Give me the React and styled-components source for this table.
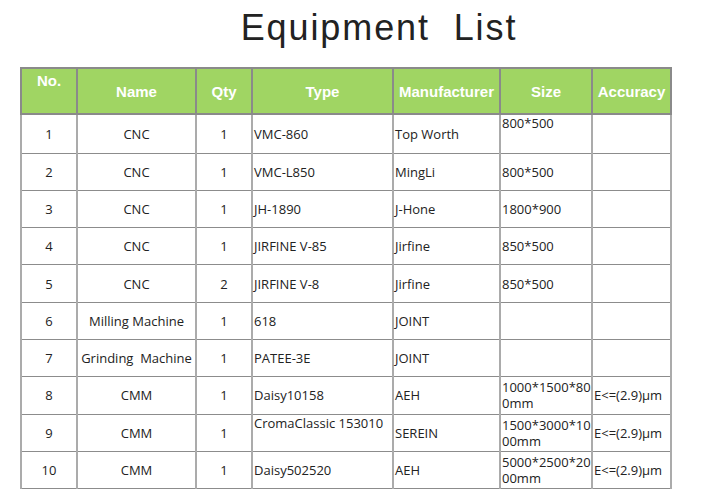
import React from "react";
import styled, { createGlobalStyle } from "styled-components";

const GlobalStyle = createGlobalStyle`
  body {
    margin: 0;
    background: #ffffff;
  }
`;

const columns = [
  { key: "no", title: "No.", width: 56, align: "center", top: true },
  { key: "name", title: "Name", width: 119, align: "center" },
  { key: "qty", title: "Qty", width: 56, align: "center" },
  { key: "type", title: "Type", width: 141, align: "left" },
  { key: "maker", title: "Manufacturer", width: 107, align: "left" },
  { key: "size", title: "Size", width: 92, align: "left" },
  { key: "acc", title: "Accuracy", width: 79, align: "left" },
];

const rows = [
  { no: "1", name: "CNC", qty: "1", type: "VMC-860", maker: "Top Worth", size: "800*500", acc: "", tall: true, sizeTop: true },
  { no: "2", name: "CNC", qty: "1", type: "VMC-L850", maker: "MingLi", size: "800*500", acc: "" },
  { no: "3", name: "CNC", qty: "1", type: "JH-1890", maker: "J-Hone", size: "1800*900", acc: "" },
  { no: "4", name: "CNC", qty: "1", type: "JIRFINE V-85", maker: "Jirfine", size: "850*500", acc: "" },
  { no: "5", name: "CNC", qty: "2", type: "JIRFINE V-8", maker: "Jirfine", size: "850*500", acc: "" },
  { no: "6", name: "Milling Machine", qty: "1", type: "618", maker: "JOINT", size: "", acc: "" },
  { no: "7", name: "Grinding\u00a0 Machine", qty: "1", type: "PATEE-3E", maker: "JOINT", size: "", acc: "" },
  { no: "8", name: "CMM", qty: "1", type: "Daisy10158", maker: "AEH", size: "1000*1500*800mm", acc: "E<=(2.9)μm" },
  { no: "9", name: "CMM", qty: "1", type: "CromaClassic 153010", maker: "SEREIN", size: "1500*3000*1000mm", acc: "E<=(2.9)μm", typeTop: true },
  { no: "10", name: "CMM", qty: "1", type: "Daisy502520", maker: "AEH", size: "5000*2500*2000mm", acc: "E<=(2.9)μm" },
];

export default function App() {
  return (
    <Page>
      <GlobalStyle />
      <Title>Equipment&nbsp; List</Title>
      <Table>
        <colgroup>
          {columns.map((c) => (
            <col key={c.key} style={{ width: c.width }} />
          ))}
        </colgroup>
        <thead>
          <tr>
            {columns.map((c) => (
              <HeadCell key={c.key} $top={c.top}>
                {c.title}
              </HeadCell>
            ))}
          </tr>
        </thead>
        <tbody>
          {rows.map((r) => (
            <Row key={r.no} $tall={r.tall}>
              {columns.map((c) => (
                <Cell
                  key={c.key}
                  $align={c.align}
                  $top={(c.key === "size" && r.sizeTop) || (c.key === "type" && r.typeTop)}
                  $dark={c.key === "acc"}
                >
                  {r[c.key]}
                </Cell>
              ))}
            </Row>
          ))}
        </tbody>
      </Table>
    </Page>
  );
}

const Page = styled.div`
  width: 716px;
  height: 495px;
  padding-top: 6px;
  box-sizing: border-box;
  overflow: hidden;
`;

const Title = styled.h1`
  margin: 0 0 0 42px;
  height: 61px;
  text-align: center;
  font-family: "Liberation Sans", Arial, sans-serif;
  font-weight: 400;
  font-size: 36px;
  letter-spacing: 1.9px;
  line-height: 44px;
  color: #222222;
`;

const Table = styled.table`
  margin-left: 20px;
  width: 652px;
  table-layout: fixed;
  border-collapse: collapse;
`;

const HeadCell = styled.th`
  box-sizing: border-box;
  height: 46px;
  padding: ${(p) => (p.$top ? "3px 0 0" : "1px 0 0")};
  vertical-align: ${(p) => (p.$top ? "top" : "middle")};
  background: #a0d563;
  border: 2px solid #8a8a8a;
  font-family: "Liberation Sans", Arial, sans-serif;
  font-weight: 700;
  font-size: 15px;
  line-height: 18px;
  color: #ffffff;
  text-align: center;
  white-space: nowrap;
  overflow: hidden;
`;

const Row = styled.tr`
  height: ${(p) => (p.$tall ? "39px" : "37.3px")};
`;

const Cell = styled.td`
  padding: ${(p) => (p.$align === "left" ? "0 0 0 1px" : "0")};
  text-align: ${(p) => p.$align};
  vertical-align: ${(p) => (p.$top ? "top" : "middle")};
  border-top: 1px solid #8c8c8c;
  border-bottom: 1px solid #8c8c8c;
  border-left: 2px solid ${(p) => (p.$dark ? "#707070" : "#ababab")};
  border-right: 2px solid #ababab;
  font-family: "Open Sans", "Noto Sans", sans-serif;
  font-size: 13px;
  line-height: 16px;
  color: #222222;
  word-break: break-all;
  white-space: ${(p) => (p.$align === "center" ? "nowrap" : "normal")};
`;
